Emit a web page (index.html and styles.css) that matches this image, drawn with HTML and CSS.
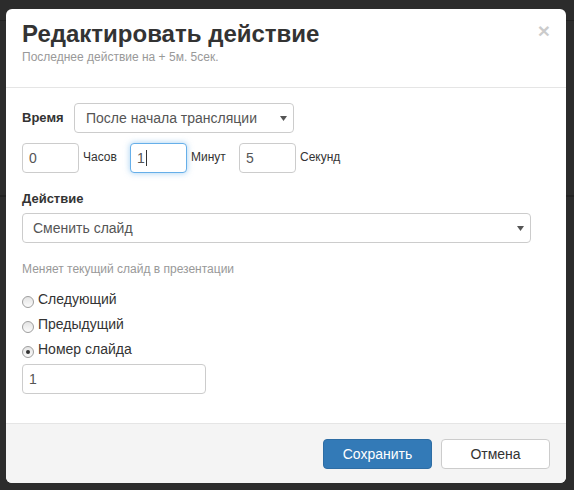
FILE: index.html
```html
<!DOCTYPE html>
<html lang="ru">
<head>
<meta charset="utf-8">
<title>Редактировать действие</title>
<link rel="stylesheet" href="styles.css">
</head>
<body>
<div class="backdrop">
  <div class="modal">
    <div class="modal-header">
      <div class="titles">
        <h3 class="title">Редактировать действие</h3>
        <div class="subtitle">Последнее действие на + 5м. 5сек.</div>
      </div>
      <span class="close">×</span>
    </div>
    <div class="modal-body">
      <div class="row-time">
        <span class="label">Время</span>
        <div class="select select-time">
          <span>После начала трансляции</span>
          <svg class="caret" width="7" height="5" viewBox="0 0 7 5"><path d="M0 0H7L3.5 5Z" fill="#555"/></svg>
        </div>
      </div>
      <div class="row-inputs">
        <div class="input small">0</div>
        <span class="unit">Часов</span>
        <div class="input small focus">1<span class="cursor"></span></div>
        <span class="unit">Минут</span>
        <div class="input small">5</div>
        <span class="unit">Секунд</span>
      </div>
      <div class="label block">Действие</div>
      <div class="select select-action">
        <span>Сменить слайд</span>
        <svg class="caret" width="7" height="5" viewBox="0 0 7 5"><path d="M0 0H7L3.5 5Z" fill="#555"/></svg>
      </div>
      <div class="help">Меняет текущий слайд в презентации</div>
      <div class="radios">
        <div class="radio-row"><span class="radio"></span><span>Следующий</span></div>
        <div class="radio-row"><span class="radio"></span><span>Предыдущий</span></div>
        <div class="radio-row"><span class="radio checked"></span><span>Номер слайда</span></div>
      </div>
      <div class="input wide">1</div>
    </div>
    <div class="modal-footer">
      <button class="btn btn-primary">Сохранить</button>
      <button class="btn btn-default">Отмена</button>
    </div>
  </div>
</div>
</body>
</html>
```
FILE: styles.css
```css
* { box-sizing: border-box; }
html, body { margin: 0; padding: 0; }
body {
  background-color: #2c2c2c;
  background-image:
    linear-gradient(#222, #222),
    linear-gradient(#222, #222);
  background-size: 100% 1px, 100% 2px;
  background-position: 0 20px, 0 195px;
  background-repeat: no-repeat;
  font-family: "Liberation Sans", Arial, sans-serif;
  color: #333;
  width: 574px;
  height: 490px;
  overflow: hidden;
}
.backdrop {
  padding: 9px 0 0 6px;
}
.modal {
  width: 560px;
  height: 474px;
  background: #fff;
  border-radius: 6px;
  display: flex;
  flex-direction: column;
  overflow: hidden;
}
.modal-header {
  display: flex;
  justify-content: space-between;
  align-items: flex-start;
  padding: 12px 16px 0 16px;
  height: 79px;
  border-bottom: 1px solid #e5e5e5;
  flex-shrink: 0;
}
.title {
  margin: 0;
  font-size: 24px;
  line-height: 26px;
  font-weight: bold;
  color: #333;
}
.subtitle {
  margin-top: 2px;
  font-size: 12px;
  line-height: 17px;
  color: #999;
}
.close {
  font-size: 21px;
  font-weight: bold;
  line-height: 1;
  color: #000;
  opacity: 0.2;
  margin-top: -1px;
}
.modal-body {
  flex: 1;
  padding: 15px 16px 0 16px;
}
.row-time {
  display: flex;
  align-items: center;
}
.label {
  font-size: 13px;
  font-weight: bold;
  line-height: 18px;
  color: #333;
}
.row-time .label { width: 52px; }
.select {
  display: flex;
  align-items: center;
  justify-content: space-between;
  height: 30px;
  border: 1px solid #ccc;
  border-radius: 4px;
  font-size: 14px;
  color: #555;
  padding: 0 6px 0 11px;
  background: #fff;
}
.select-time { width: 220px; }
.select-action { width: 509px; margin-top: 5px; padding-left: 10px; }
.row-inputs {
  display: flex;
  align-items: center;
  margin-top: 10px;
}
.input {
  height: 30px;
  border: 1px solid #ccc;
  border-radius: 4px;
  font-size: 14px;
  line-height: 28px;
  color: #555;
  padding: 0 6px;
  background: #fff;
  display: flex;
  align-items: center;
}
.input.small { width: 57px; }
.input.focus {
  border-color: #66afe9;
  box-shadow: 0 0 6px rgba(102, 175, 233, 0.6);
}
.cursor {
  display: inline-block;
  width: 1px;
  height: 16px;
  background: #333;
  margin-left: 1px;
}
.unit {
  font-size: 12px;
  color: #333;
  margin-left: 4px;
  width: 47px;
  padding-bottom: 2px;
}
.row-inputs .unit:nth-of-type(2) { width: 48px; }
.label.block { margin-top: 17px; }
.help {
  margin-top: 18px;
  font-size: 12px;
  line-height: 17px;
  color: #999;
}
.radios {
  margin-top: 11px;
}
.radio-row {
  display: flex;
  align-items: flex-start;
  font-size: 14px;
  line-height: 20px;
  height: 20px;
  margin-bottom: 5px;
}
.radio {
  width: 12px;
  height: 12px;
  border-radius: 50%;
  border: 1px solid #9e9e9e;
  background: linear-gradient(#e4e4e4, #fbfbfb);
  margin: 7px 4px 0 0;
  position: relative;
}
.radio.checked::after {
  content: "";
  position: absolute;
  left: 3px;
  top: 3px;
  width: 4px;
  height: 4px;
  border-radius: 50%;
  background: #333;
}
.input.wide { width: 184px; }
.modal-footer {
  flex-shrink: 0;
  height: 60px;
  border-top: 1px solid #e5e5e5;
  background: #f4f4f4;
  display: flex;
  justify-content: flex-end;
  align-items: flex-start;
  gap: 9px;
  padding: 15px 16px 0 16px;
}
.btn {
  width: 109px;
  height: 30px;
  border-radius: 4px;
  font-family: "Liberation Sans", Arial, sans-serif;
  font-size: 14px;
  border: 1px solid;
  padding: 0;
}
.btn-primary {
  background: #337ab7;
  border-color: #2e6da4;
  color: #fff;
}
.btn-default {
  background: #fff;
  border-color: #ccc;
  color: #333;
}
```
